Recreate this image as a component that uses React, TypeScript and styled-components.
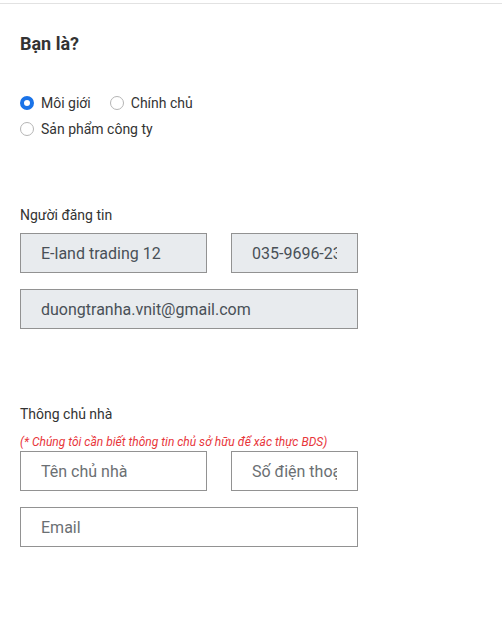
import React from "react";
import styled, { createGlobalStyle } from "styled-components";

const Global = createGlobalStyle`
  html, body { margin: 0; padding: 0; background: #fff; }
  body { font-family: Roboto, "Noto Sans", Arial, sans-serif; color: #333; }
  * { box-sizing: border-box; }
`;

const Page = styled.div`
  margin-top: 3px;
  border-top: 1px solid #e2e2e2;
  padding: 28px 20px 0 20px;
  min-height: 614px;
`;

const Heading = styled.h2`
  margin: 0;
  font-size: 18px;
  font-weight: 700;
  line-height: 24px;
  color: #333;
`;

const RadioGroup = styled.div`
  margin-top: 37px;
  display: flex;
  flex-wrap: wrap;
  width: 220px;
  column-gap: 19px;
  row-gap: 6px;
`;

const RadioLabel = styled.label`
  display: flex;
  align-items: center;
  gap: 7px;
  font-size: 14px;
  line-height: 20px;
  color: #333;
  cursor: pointer;
`;

const RadioCircle = styled.span<{ $checked?: boolean }>`
  width: 14px;
  height: 14px;
  border-radius: 50%;
  flex: none;
  background: #fff;
  border: ${(p) => (p.$checked ? "4px solid #1a73e8" : "1px solid #b5b5b5")};
`;

const Section = styled.div<{ $top: number }>`
  margin-top: ${(p) => p.$top}px;
`;

const Label = styled.div`
  font-size: 14px;
  line-height: 18px;
  color: #333;
`;

const Note = styled.div`
  font-size: 12px;
  font-style: italic;
  line-height: 16px;
  color: #e8363b;
  margin-top: 11px;
`;

const Fields = styled.div<{ $top: number }>`
  margin-top: ${(p) => p.$top}px;
  display: grid;
  grid-template-columns: 187px 127px;
  column-gap: 24px;
  row-gap: 16px;
  width: 338px;
`;

const Input = styled.input<{ $wide?: boolean; $readonly?: boolean }>`
  grid-column: ${(p) => (p.$wide ? "1 / span 2" : "auto")};
  height: 40px;
  width: 100%;
  border: 1px solid #929292;
  border-radius: 0;
  padding: 0 20px;
  font-family: Roboto, "Noto Sans", Arial, sans-serif;
  font-size: 16px;
  color: #495057;
  background: ${(p) => (p.$readonly ? "#e8ebee" : "#fff")};
  outline: none;
  &::placeholder { color: #6b6f73; opacity: 1; }
`;

const options = [
  { label: "Môi giới", checked: true },
  { label: "Chính chủ", checked: false },
  { label: "Sản phẩm công ty", checked: false },
];

export default function App() {
  return (
    <>
      <Global />
      <Page>
        <Heading>Bạn là?</Heading>
        <RadioGroup>
          {options.map((o) => (
            <RadioLabel key={o.label}>
              <RadioCircle $checked={o.checked} />
              {o.label}
            </RadioLabel>
          ))}
        </RadioGroup>
        <Section $top={67}>
          <Label>Người đăng tin</Label>
          <Fields $top={9}>
            <Input $readonly readOnly value="E-land trading 12" />
            <Input $readonly readOnly value="035-9696-2345" />
            <Input $readonly $wide readOnly value="duongtranha.vnit@gmail.com" />
          </Fields>
        </Section>
        <Section $top={76}>
          <Label>Thông chủ nhà</Label>
          <Note>(* Chúng tôi cần biết thông tin chủ sở hữu để xác thực BDS)</Note>
          <Fields $top={1}>
            <Input placeholder="Tên chủ nhà" />
            <Input placeholder="Số điện thoại" />
            <Input $wide placeholder="Email" />
          </Fields>
        </Section>
      </Page>
    </>
  );
}
